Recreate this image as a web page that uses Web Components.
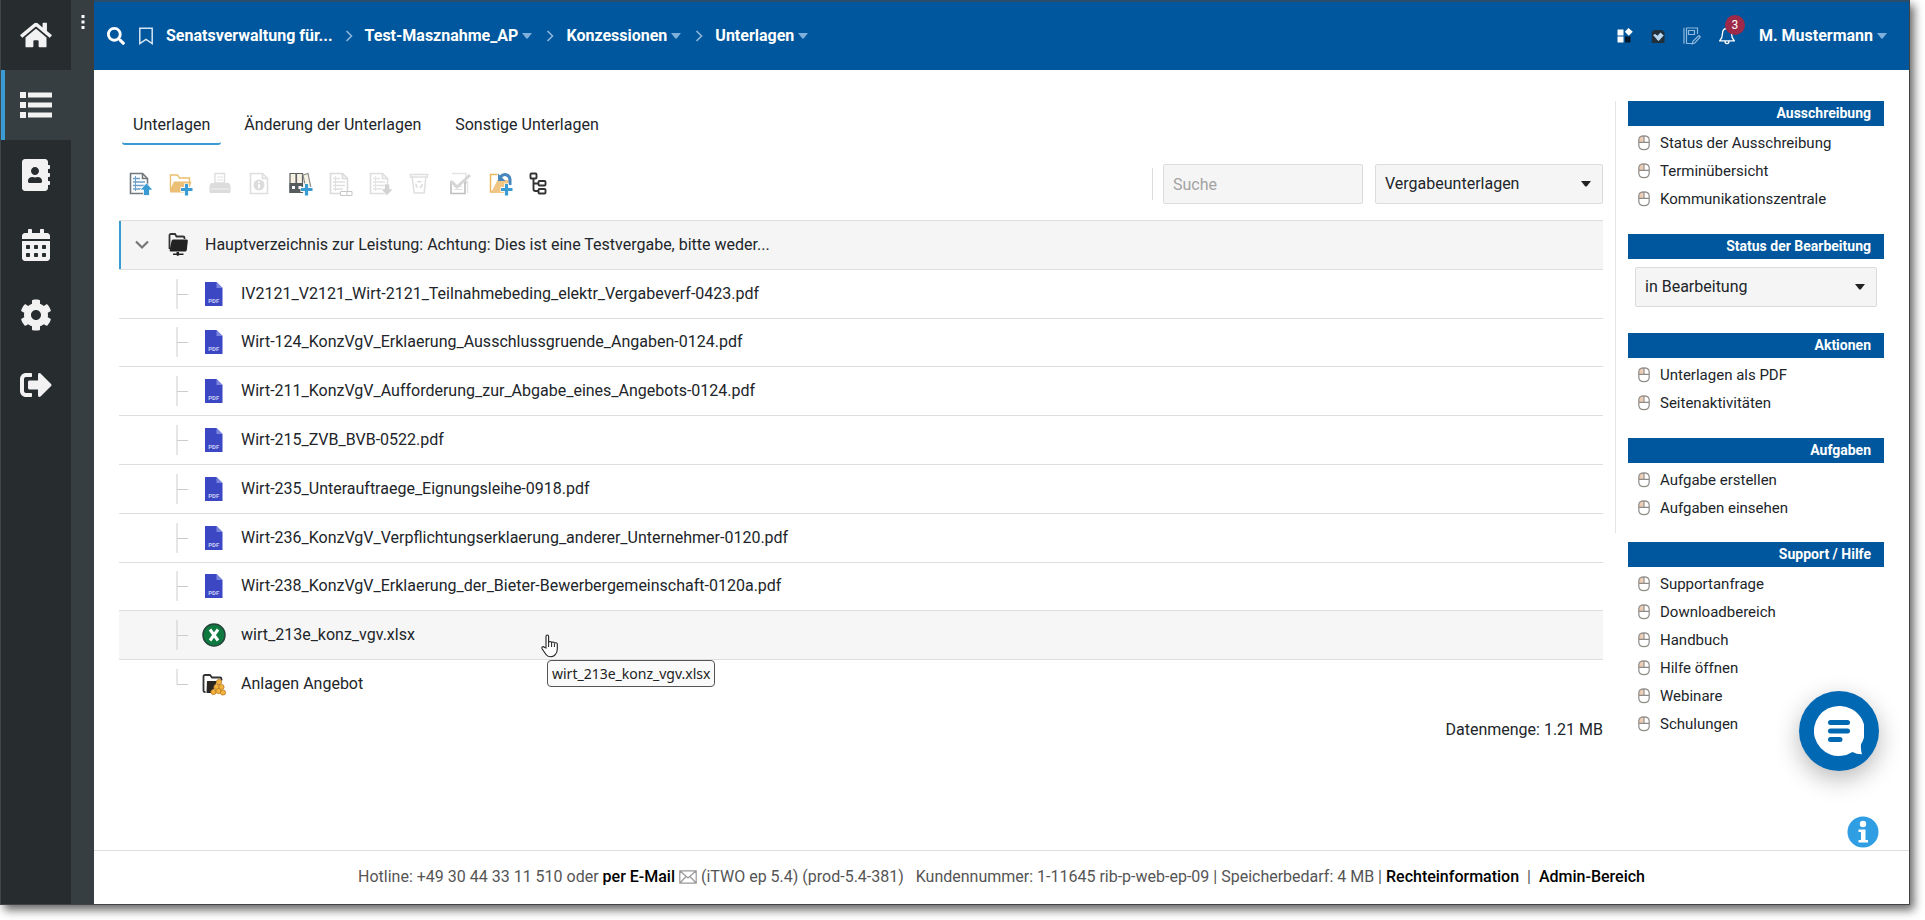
<!DOCTYPE html>
<html lang="de">
<head>
<meta charset="utf-8">
<title>Unterlagen</title>
<style>
  html { background: #fff; }
  body { margin: 0; font: 16px/24px Roboto, "Liberation Sans", sans-serif; color: #212529; }
</style>
</head>
<body>
<app-shell>
  <nav-rail slot="nav"></nav-rail>
  <top-bar slot="header"></top-bar>
  <main-view>
    <tab-strip slot="tabs"></tab-strip>
    <tool-bar slot="tools"></tool-bar>
    <file-tree>
      <file-row kind="root" icon="netfolder">Hauptverzeichnis zur Leistung: Achtung: Dies ist eine Testvergabe, bitte weder...</file-row>
      <file-row icon="pdf">IV2121_V2121_Wirt-2121_Teilnahmebeding_elektr_Vergabeverf-0423.pdf</file-row>
      <file-row icon="pdf">Wirt-124_KonzVgV_Erklaerung_Ausschlussgruende_Angaben-0124.pdf</file-row>
      <file-row icon="pdf">Wirt-211_KonzVgV_Aufforderung_zur_Abgabe_eines_Angebots-0124.pdf</file-row>
      <file-row icon="pdf">Wirt-215_ZVB_BVB-0522.pdf</file-row>
      <file-row icon="pdf">Wirt-235_Unterauftraege_Eignungsleihe-0918.pdf</file-row>
      <file-row icon="pdf">Wirt-236_KonzVgV_Verpflichtungserklaerung_anderer_Unternehmer-0120.pdf</file-row>
      <file-row icon="pdf">Wirt-238_KonzVgV_Erklaerung_der_Bieter-Bewerbergemeinschaft-0120a.pdf</file-row>
      <file-row kind="hover" icon="xlsx" tip="wirt_213e_konz_vgv.xlsx">wirt_213e_konz_vgv.xlsx</file-row>
      <file-row kind="last" icon="bids">Anlagen Angebot</file-row>
    </file-tree>
    <data-volume slot="sum">Datenmenge: 1.21 MB</data-volume>
    <side-column slot="side">
      <side-panel heading="Ausschreibung">
        <panel-link>Status der Ausschreibung</panel-link>
        <panel-link>Terminübersicht</panel-link>
        <panel-link>Kommunikationszentrale</panel-link>
      </side-panel>
      <side-panel heading="Status der Bearbeitung" kind="field">
        <select-box label="Status der Bearbeitung" value="in Bearbeitung"></select-box>
      </side-panel>
      <side-panel heading="Aktionen">
        <panel-link>Unterlagen als PDF</panel-link>
        <panel-link>Seitenaktivitäten</panel-link>
      </side-panel>
      <side-panel heading="Aufgaben">
        <panel-link>Aufgabe erstellen</panel-link>
        <panel-link>Aufgaben einsehen</panel-link>
      </side-panel>
      <side-panel heading="Support / Hilfe" slot="support">
        <panel-link>Supportanfrage</panel-link>
        <panel-link>Downloadbereich</panel-link>
        <panel-link>Handbuch</panel-link>
        <panel-link>Hilfe öffnen</panel-link>
        <panel-link>Webinare</panel-link>
        <panel-link>Schulungen</panel-link>
      </side-panel>
    </side-column>
  </main-view>
  <float-buttons slot="float"></float-buttons>
  <page-footer slot="footer"></page-footer>
</app-shell>

<script>
const sheet = '<path d="M1.5 1.5h12l5 5v15h-17z" fill="#fff" stroke="C" stroke-width="1.6"/><path d="M13.5 1.5v5h5" fill="none" stroke="C" stroke-width="1.6"/>';
const lines = '<path d="M4 6.5h7M4 10h12M4 13.5h12M4 17h10" stroke="L" stroke-width="1.3"/><path d="M6.5 4v15" stroke="L" stroke-width="1"/>';
const plus = '<path d="M17.5 11.5v12M11.5 17.5h12" stroke="#fff" stroke-width="5"/><path d="M17.5 12v11.5M12 17.5h11.5" stroke="#3a9bd3" stroke-width="3.2"/>';
const ICONS = {
  home: ['0 0 576 512', '<path fill="currentColor" d="M280.37 148.26L96 300.11V464a16 16 0 0 0 16 16l112.06-.29a16 16 0 0 0 15.92-16V368a16 16 0 0 1 16-16h64a16 16 0 0 1 16 16v95.64a16 16 0 0 0 16 16.05L464 480a16 16 0 0 0 16-16V300L295.67 148.26a12.19 12.19 0 0 0-15.3 0zM571.6 251.47L488 182.56V44.05a12 12 0 0 0-12-12h-56a12 12 0 0 0-12 12v72.61L318.47 43a48 48 0 0 0-61 0L4.34 251.47a12 12 0 0 0-1.6 16.9l25.5 31A12 12 0 0 0 45.15 301l235.22-193.74a12.19 12.19 0 0 1 15.3 0L530.9 301a12 12 0 0 0 16.9-1.6l25.5-31a12 12 0 0 0-1.7-16.93z"/>'],
  list: ['0 0 32 32', '<path fill="currentColor" d="M0 3h6v6H0zM8 3.5h24v5H8zM0 13h6v6H0zM8 13.5h24v5H8zM0 23h6v6H0zM8 23.5h24v5H8z"/>'],
  contacts: ['0 0 448 512', '<path fill="currentColor" d="M436 160c6.6 0 12-5.4 12-12v-40c0-6.6-5.4-12-12-12h-20V48c0-26.5-21.5-48-48-48H48C21.5 0 0 21.5 0 48v416c0 26.5 21.5 48 48 48h320c26.5 0 48-21.5 48-48v-48h20c6.6 0 12-5.4 12-12v-40c0-6.6-5.4-12-12-12h-20v-64h20c6.6 0 12-5.4 12-12v-40c0-6.6-5.4-12-12-12h-20v-64h20zm-228-32c35.3 0 64 28.7 64 64s-28.7 64-64 64-64-28.7-64-64 28.7-64 64-64zm112 236.8c0 10.6-10 19.2-22.4 19.2H118.4C106 384 96 375.4 96 364.8v-19.2c0-31.8 30.1-57.6 67.2-57.6h5c12.3 5.1 25.7 8 39.8 8s27.6-2.9 39.8-8h5c37.1 0 67.2 25.8 67.2 57.6v19.2z"/>'],
  calendar: ['0 0 448 512', '<path fill="currentColor" d="M0 464c0 26.5 21.5 48 48 48h352c26.5 0 48-21.5 48-48V192H0v272zm320-196c0-6.6 5.4-12 12-12h40c6.6 0 12 5.4 12 12v40c0 6.6-5.4 12-12 12h-40c-6.6 0-12-5.4-12-12v-40zm0 128c0-6.6 5.4-12 12-12h40c6.6 0 12 5.4 12 12v40c0 6.6-5.4 12-12 12h-40c-6.6 0-12-5.4-12-12v-40zM192 268c0-6.6 5.4-12 12-12h40c6.6 0 12 5.4 12 12v40c0 6.6-5.4 12-12 12h-40c-6.6 0-12-5.4-12-12v-40zm0 128c0-6.6 5.4-12 12-12h40c6.6 0 12 5.4 12 12v40c0 6.6-5.4 12-12 12h-40c-6.6 0-12-5.4-12-12v-40zM64 268c0-6.6 5.4-12 12-12h40c6.6 0 12 5.4 12 12v40c0 6.6-5.4 12-12 12H76c-6.6 0-12-5.4-12-12v-40zm0 128c0-6.6 5.4-12 12-12h40c6.6 0 12 5.4 12 12v40c0 6.6-5.4 12-12 12H76c-6.6 0-12-5.4-12-12v-40zM400 64h-48V16c0-8.8-7.2-16-16-16h-32c-8.8 0-16 7.2-16 16v48H160V16c0-8.8-7.2-16-16-16h-32c-8.8 0-16 7.2-16 16v48H48C21.5 64 0 85.5 0 112v48h448v-48c0-26.5-21.5-48-48-48z"/>'],
  cog: ['0 0 512 512', '<path fill="currentColor" d="M487.4 315.7l-42.6-24.6c4.3-23.2 4.3-47 0-70.2l42.6-24.6c4.9-2.8 7.1-8.6 5.5-14-11.1-35.6-30-67.8-54.7-94.6-3.8-4.1-10-5.1-14.8-2.3L380.8 110c-17.9-15.4-38.5-27.3-60.8-35.1V25.8c0-5.6-3.9-10.5-9.4-11.7-36.7-8.2-74.3-7.8-109.2 0-5.5 1.2-9.4 6.1-9.4 11.7V75c-22.2 7.9-42.8 19.8-60.8 35.1L88.7 85.5c-4.9-2.8-11-1.9-14.8 2.3-24.7 26.7-43.6 58.9-54.7 94.6-1.7 5.4.6 11.2 5.5 14L67.3 221c-4.3 23.2-4.3 47 0 70.2l-42.6 24.6c-4.9 2.8-7.1 8.6-5.5 14 11.1 35.6 30 67.8 54.7 94.6 3.8 4.1 10 5.1 14.8 2.3l42.6-24.6c17.9 15.4 38.5 27.3 60.8 35.1v49.2c0 5.6 3.9 10.5 9.4 11.7 36.7 8.2 74.3 7.8 109.2 0 5.5-1.2 9.4-6.1 9.4-11.7v-49.2c22.2-7.9 42.8-19.8 60.8-35.1l42.6 24.6c4.9 2.8 11 1.9 14.8-2.3 24.7-26.7 43.6-58.9 54.7-94.6 1.5-5.5-.7-11.3-5.6-14.1zM256 336c-44.1 0-80-35.9-80-80s35.9-80 80-80 80 35.9 80 80-35.9 80-80 80z"/>'],
  logout: ['0 0 512 512', '<path fill="currentColor" d="M497 273L329 441c-15 15-41 4.5-41-17v-96H152c-13.3 0-24-10.7-24-24v-96c0-13.3 10.7-24 24-24h136V88c0-21.4 25.9-32 41-17l168 168c9.3 9.4 9.3 24.6 0 34zM192 436v-40c0-6.6-5.4-12-12-12H96c-17.7 0-32-14.3-32-32V160c0-17.7 14.3-32 32-32h84c6.6 0 12-5.4 12-12V76c0-6.6-5.4-12-12-12H96c-53 0-96 43-96 96v192c0 53 43 96 96 96h84c6.6 0 12-5.4 12-12z"/>'],
  dots: ['0 0 4 16', '<path fill="#fff" d="M.5 1h3v3h-3zM.5 6.5h3v3h-3zM.5 12h3v3h-3z"/>'],
  search: ['0 0 512 512', '<path fill="currentColor" d="M505 442.7L405.3 343c-4.5-4.5-10.6-7-17-7H372c27.6-35.3 44-79.7 44-128C416 93.1 322.9 0 208 0S0 93.1 0 208s93.1 208 208 208c48.3 0 92.7-16.4 128-44v16.3c0 6.4 2.5 12.5 7 17l99.7 99.7c9.4 9.4 24.6 9.4 33.9 0l28.3-28.3c9.4-9.4 9.4-24.6.1-34zM208 336c-70.7 0-128-57.2-128-128 0-70.7 57.2-128 128-128 70.7 0 128 57.2 128 128 0 70.7-57.2 128-128 128z"/>'],
  bookmark: ['0 0 14 18', '<path fill="none" stroke="#d5e5f3" stroke-width="1.5" d="M.8 1.3h12.4v15.2L7 12.3.8 16.5z"/>'],
  chevron: ['0 0 8 12', '<path fill="none" stroke="#8db5d9" stroke-width="1.6" d="M1.5 1l5 5-5 5"/>'],
  caret: ['0 0 10 6', '<path fill="currentColor" d="M0 0h10L5.7 5.5H4.3z"/>'],
  apps: ['0 0 16 16', '<path fill="#fff" d="M.5 1.5h6v6h-6zM.5 8.500h6v6h-6zM11.500 0l4.300 3.800-4 4-4-4z"/><path fill="#06182b" d="M8 8.500h5.500v6H8z"/>'],
  check: ['0 0 14 16', '<path fill="#22303c" d="M3 2h8l2.500 2.500V15H.8V4z"/><path fill="#b9d8ef" d="M9.500 4.500l3.200 3-5 5.500-1.700-1.200-.8-1.300L2 7l2.200-1 2.300 1.700z"/>'],
  notes: ['0 0 18 18', '<g fill="none" stroke="#8fb9de" stroke-width="1.200"><path d="M1 .8v16M3.500.8v16M11 16.500H3.500M3.500 1h11v6M5.500 3.500h6v4h-6z"/><path d="M15.800 8.500l1.500 1.500-5.500 6-2.500.8.600-2.600z"/></g>'],
  bell: ['0 0 16 18', '<path fill="none" stroke="#fff" stroke-width="1.300" d="M8 1.500c-3 0-4.500 2.300-4.500 5 0 4-1 5.500-2.700 7.300h14.400C13.500 12 12.500 10.500 12.500 6.500c0-2.700-1.500-5-4.500-5zM6 14c0 3.500 4 3.500 4 0M8 0v1.500"/>'],
  upload: ['0 0 24 24', sheet.replaceAll('C', '#72787c') + lines.replaceAll('L', '#6c9fc9') + '<path d="M17.500 11l6.500 7h-3.500v5.500h-6V18H11z" fill="#3a9bd3" stroke="#fff" stroke-width=".8"/>'],
  addfolder: ['0 0 24 24', '<path d="M1.500 19V3h7l2 3h10v4" fill="none" stroke="#ecbf6d" stroke-width="1.400"/><path d="M1 20.500V18L5 9.500h17.500l-3 11z" fill="#ebc076"/>' + plus],
  print: ['0 0 24 24', '<path d="M6 1.500h9.500V11H6z" fill="#fff" stroke="#dedede" stroke-width="1.400"/><path d="M8 5h6M8 8h6" stroke="#e2e2e2"/><path d="M2 11h18l1.500 3v6a1 1 0 0 1-1 1h-19a1 1 0 0 1-1-1v-6z" fill="#dcdcdc"/><path d="M2 17h18" stroke="#f2f2f2"/>'],
  info: ['0 0 24 24', sheet.replaceAll('C', '#dedede') + '<circle cx="10" cy="13" r="5.500" fill="#dcdcdc"/><path d="M10 9.500v1.500M10 12.300v4" stroke="#fff" stroke-width="1.800"/>'],
  binders: ['0 0 24 24', '<path d="M1 1.500h6v19H1zM7.500 1.500h6v19h-6z" fill="#f7f1e2" stroke="#5e6264" stroke-width="1.200"/><path d="M14 3l5-1.500 3.500 17-5 1.500z" fill="#f7f1e2" stroke="#8a8a88" stroke-width="1.200"/><path d="M.500 11h13.500v10H.500z" fill="#565b5e"/><path d="M3 14h3v3H3zM9.500 14h3v3h-3z" fill="#fff"/>' + plus],
  rename: ['0 0 24 24', sheet.replaceAll('C', '#dadada') + lines.replaceAll('L', '#e0e0e0') + '<path d="M11.500 19.500h11.500v4H11.500z" fill="#fff" stroke="#c6c6c6"/><path d="M18 19.500v4" stroke="#c6c6c6"/>'],
  download: ['0 0 24 24', sheet.replaceAll('C', '#dedede') + lines.replaceAll('L', '#e4e4e4') + '<path d="M15.500 12h5v5h3.500l-6 6.500-6-6.500h3.500z" fill="#d2d2d2" stroke="#fff" stroke-width=".6"/>'],
  trash: ['0 0 24 24', '<path d="M1.500 2.500h17v2.500h-17zM3.200 5.500l2 15.500h10l1.600-15.500" fill="none" stroke="#dfdfdf" stroke-width="1.500"/><circle cx="10" cy="12.500" r="3" fill="none" stroke="#dcdcdc" stroke-width="1.600" stroke-dasharray="4 2"/>'],
  verify: ['0 0 24 24', '<path d="M3 1.500h14V12M18.500 9v12" fill="none" stroke="#e4e4e4" stroke-width="1.400"/><path d="M2 9v12.500h14V9" fill="none" stroke="#bfbfbf" stroke-width="1.600"/><path d="M5 17.500h8M5 14.500h8" stroke="#e0e0e0"/><path d="M2 9l6 6L21 3" fill="none" stroke="#d6d6d6" stroke-width="3"/>'],
  restore: ['0 0 24 24', '<path d="M1.500 20.500V2.500h7M1.500 20.500L6 18" fill="none" stroke="#ecb95f" stroke-width="1.500"/><path d="M2 21L8.500 8H20l-3.500 13z" fill="#efc684"/><path d="M11.500 5c3-4 9-3 9.500 2.500V13" fill="none" stroke="#4787bd" stroke-width="3"/><path d="M9 1.500V9h7.500z" fill="#4787bd"/>' + plus],
  tree: ['0 0 24 24', '<g fill="none" stroke="#333" stroke-width="1.900"><rect x="1.500" y="1.500" width="6" height="5" rx="1"/><rect x="9.500" y="9" width="7" height="4.500" rx="1"/><rect x="9.500" y="17" width="7" height="4.500" rx="1"/><path d="M4.500 6.500V17q0 2 2 2h3M4.500 11.500h5"/></g>'],
  netfolder: ['0 0 20 24', '<path d="M1.500 16V2.500q0-1.500 1.500-1.500h4l1.500 2.500h6.500q1.500 0 1.500 1.500v1" fill="none" stroke="#333" stroke-width="1.800"/><path d="M5 6.500h13.500q1.500 0 1.300 1.500l-1 9q-.3 1.500-1.800 1.500H2.500q-1 0-.8-1.500L3.500 8q.3-1.500 1.500-1.500zM5 20.500h3.500V19h2.500v1.500h4.500v1.500H11q-1.200 2-2.400 0H5z" fill="#222"/>'],
  down: ['0 0 14 10', '<path fill="none" stroke="#777" stroke-width="2.200" d="M1 1.500l6 6 6-6"/>'],
  pdf: ['0 0 24 26', '<path d="M3 1h11.500l6 6v18H3z" fill="#3b47c3"/><path d="M14.500 1l6 6h-6z" fill="#7d86df"/><text x="11.700" y="22" font-family="Roboto, sans-serif" font-weight="700" font-size="6" fill="#c9cdf5" text-anchor="middle">PDF</text>'],
  xlsx: ['0 0 24 24', '<circle cx="12" cy="12" r="11" fill="#0f7a40" stroke="#26453a" stroke-width="1.500"/><path d="M8 6.500l8 11M16 6.500l-8 11" stroke="#fff" stroke-width="3"/>'],
  bids: ['0 0 24 24', '<path d="M3.500 20H3q-1.500 0-1.500-1.500v-14Q1.500 3 3 3h5l2 2.500h8q1.500 0 1.500 1.500v1.500" fill="none" stroke="#333" stroke-width="1.800"/><path d="M5 9h10l-5 12H4.500z" fill="#2b2620"/><g fill="#f3b33f" stroke="#b97a1d" stroke-width=".8"><circle cx="17" cy="10" r="2.600"/><circle cx="14.500" cy="15" r="2.600"/><circle cx="19.500" cy="15" r="2.600"/><circle cx="11.500" cy="20" r="2.600"/><circle cx="16.500" cy="19" r="2.600"/><circle cx="21" cy="20.500" r="2.600"/></g>'],
  join: ['0 0 12 30', '<path d="M1 0v30M1 15.500h11" fill="none" stroke="#ccc" stroke-width="1"/>'],
  end: ['0 0 12 30', '<path d="M1 0v15.500h11" fill="none" stroke="#ccc" stroke-width="1"/>'],
  mouse: ['0 0 12 16', '<path d="M1 7V4.500Q1 1 5.500 1V7z" fill="#edccb5"/><path d="M6 .8q5.200 0 5.200 4.200v5q0 4.700-5.200 4.700T.8 10V5Q.8.800 6 .8zM.8 7.300h10.400M6 .8v6.500" fill="none" stroke="#8f8b87" stroke-width="1.200"/>'],
  mail: ['0 0 18 14', '<g fill="none" stroke="#999" stroke-width="1.200"><path d="M.8.8h16.400v12.400H.8zM1 1l8 7 8-7M1 13l6-6.500M17 13l-6-6.500"/></g>'],
  hand: ['0 0 18 24', '<path d="M5 14V2.500q0-1.500 1.300-1.500T7.600 2.500V9q.2-1.500 1.500-1.500 1.400 0 1.500 1.500 .2-1 1.400-1 1.300 0 1.400 1.500 .3-.8 1.400-.8 1.500 0 1.500 1.600V15q0 3-1.600 5-1.500 2.700-5 2.700T5 20.500L1.200 15q-.8-1.700.4-2.200 1-.5 2 .7z" fill="#fff" stroke="#222" stroke-width="1.100"/><path d="M7.600 9v4M10.600 9v4M13.400 10v3" stroke="#222"/>'],
  chat: ['0 0 50 50', '<path d="M25 0a25 25 0 1 0 13.500 46q4.500 2.500 9.500 2.300-1.500-5-1-10A25 25 0 0 0 25 0z" fill="#fff"/><path d="M16.500 16.500h17M16.500 25h17M16.500 33.500h9.500" stroke="#0168b3" stroke-width="5" stroke-linecap="round"/>'],
  about: ['0 0 32 32', '<circle cx="16" cy="16" r="15.500" fill="#2f9ee2"/><circle cx="16" cy="8" r="3.200" fill="#fff"/><path d="M11.500 13.500h7v10.500h2.500v2.500H11.500V24H14v-8h-2.500z" fill="#fff"/>']
};

class Base extends HTMLElement {
  connectedCallback() {
    if (this.shadowRoot) return;
    this.attachShadow({ mode: 'open' }).innerHTML =
      '<style>:host,*{box-sizing:border-box}a{color:inherit;text-decoration:none}' +
      'button{font:inherit;color:inherit;background:none;border:0;margin:0;padding:0;display:flex;align-items:center;cursor:pointer}' +
      this.css() + '</style>' + this.html();
  }
  css() { return ':host{display:block}'; }
  html() { return '<slot></slot>'; }
}
const define = (name, css, html) => customElements.define(name, class extends Base {
  css() { return css; }
  html() { return typeof html === 'function' ? html(this) : html; }
});
const icon = (name, w, h) => `<ui-icon name="${name}" style="width:${w}px;height:${h || w}px"></ui-icon>`;

define('ui-icon', ':host{display:block;flex:none}svg{display:block;width:100%;height:100%}', el => {
  const [box, body] = ICONS[el.getAttribute('name')];
  return `<svg viewBox="${box}" aria-hidden="true">${body}</svg>`;
});

define('app-shell', `
  :host{display:block;padding:0 15px 15px 0}
  .window{position:relative;display:grid;grid-template-columns:auto minmax(0,1fr);grid-template-rows:auto 1fr auto;
    min-height:calc(100vh - 15px);background:#fff;border-right:1px solid #3f4347;border-bottom:1px solid #3f4347;
    box-shadow:4px 5px 9px rgba(0,0,0,.6)}
  .nav{grid-row:1 / 4}
`, `<div class="window"><div class="nav"><slot name="nav"></slot></div><slot name="header"></slot><slot></slot><slot name="footer"></slot><slot name="float"></slot></div>`);

define('nav-rail', `
  :host{display:flex;height:100%;background:#373e41;color:#f2f2f2;border-left:1px solid #3f4548}
  nav{width:70px;background:#272c2f}
  a{height:70px;display:flex;align-items:center;justify-content:center}
  a.on{background:#373e41;box-shadow:inset 4px 0 #3a9bd3}
  button{width:23px;height:44px;justify-content:center}
`, `<nav aria-label="Hauptnavigation">
  <a href="#start" aria-label="Startseite">${icon('home', 32, 28)}</a>
  <a href="#liste" class="on" aria-label="Liste">${icon('list', 32)}</a>
  <a href="#kontakte" aria-label="Kontakte">${icon('contacts', 28, 32)}</a>
  <a href="#kalender" aria-label="Kalender">${icon('calendar', 28, 32)}</a>
  <a href="#einstellungen" aria-label="Einstellungen">${icon('cog', 32)}</a>
  <a href="#abmelden" aria-label="Abmelden">${icon('logout', 32)}</a>
</nav><button aria-label="Menü">${icon('dots', 4, 16)}</button>`);

define('top-bar', `
  :host{display:flex;align-items:center;height:70px;padding:0 22px 0 13px;background:#00579d;border-top:2px solid #2a4d6c;color:#fff;font-weight:700}
  nav,.user{display:flex;align-items:center}
  .user{margin-left:auto}
  .find{margin-right:14px}
  .mark{margin-right:13px}
  .sep{margin:0 12px}
  .menu{gap:4px;white-space:nowrap}
  .menu ui-icon{color:#7fb0dc}
  nav .menu{padding-right:2px}
  .tools{display:flex;align-items:center;gap:18px;margin-right:24px}
  .bell{position:relative}
  .badge{position:absolute;left:6px;top:-12px;width:20px;height:20px;border-radius:50%;background:#9c2a48;font:12px/20px Roboto,sans-serif;text-align:center}
`, `<button class="find" aria-label="Suchen">${icon('search', 18)}</button>
<button class="mark" aria-label="Merken">${icon('bookmark', 14, 18)}</button>
<nav aria-label="Pfad">
  <a href="#senat">Senatsverwaltung für...</a><span class="sep">${icon('chevron', 8, 12)}</span>
  <button class="menu">Test-Masznahme_AP${icon('caret', 10, 6)}</button><span class="sep">${icon('chevron', 8, 12)}</span>
  <button class="menu">Konzessionen${icon('caret', 10, 6)}</button><span class="sep">${icon('chevron', 8, 12)}</span>
  <button class="menu">Unterlagen${icon('caret', 10, 6)}</button>
</nav>
<div class="user"><div class="tools">
  <button aria-label="Anwendungen">${icon('apps', 16)}</button>
  <button aria-label="Prüfung">${icon('check', 14, 16)}</button>
  <button aria-label="Notizen">${icon('notes', 18)}</button>
  <button class="bell" aria-label="Benachrichtigungen">${icon('bell', 16, 18)}<span class="badge">3</span></button>
</div><button class="menu">M. Mustermann${icon('caret', 10, 6)}</button></div>`);

define('main-view', `
  :host{display:grid;grid-template-columns:minmax(0,1fr) 269px;gap:12px;align-items:start;padding:31px 25px 0}
`, `<main><slot name="tabs"></slot><slot name="tools"></slot><slot></slot><slot name="sum"></slot></main><slot name="side"></slot>`);

define('tab-strip', `
  :host{display:flex;gap:12px;padding:0 3px}
  a{padding:12px 11px 6px;border-bottom:2px solid transparent;border-radius:3px}
  a.on{border-color:#3a9bd3}
`, `<a href="#unterlagen" class="on">Unterlagen</a><a href="#aenderung">Änderung der Unterlagen</a><a href="#sonstige">Sonstige Unterlagen</a>`);

define('select-box', `
  :host{display:grid;align-items:center}
  select{grid-area:1/1;width:100%;height:40px;padding:0 9px;appearance:none;font:inherit;color:#212529;background:#f5f5f5;border:1px solid #dcdcdc;border-radius:2px}
  ui-icon{grid-area:1/1;justify-self:end;margin-right:12px;color:#222;pointer-events:none}
`, el => `<select aria-label="${el.getAttribute('label')}"><option>${el.getAttribute('value')}</option></select>${icon('caret', 10, 6)}`);

define('tool-bar', `
  :host{display:flex;align-items:center;margin:19px 0 16px;padding-left:1px}
  .icons{display:flex}
  button{width:40px;height:40px;padding-left:9px}
  .fields{display:flex;align-items:center;gap:12px;margin-left:auto}
  .rule{width:1px;height:32px;margin-right:-2px;background:#dcdcdc}
  input{width:200px;height:40px;padding:0 9px;font:inherit;background:#f5f5f5;border:1px solid #dcdcdc;border-radius:2px}
  input::placeholder{color:#a3a3a3}
  select-box{width:228px}
`, `<div class="icons">${[['upload', 'Hochladen'], ['addfolder', 'Neuer Ordner'], ['print', 'Drucken'], ['info', 'Information'], ['binders', 'Ordner hinzufügen'], ['rename', 'Umbenennen'], ['download', 'Herunterladen'], ['trash', 'Papierkorb'], ['verify', 'Prüfen'], ['restore', 'Wiederherstellen'], ['tree', 'Baumansicht']]
  .map(([n, t]) => `<button aria-label="${t}">${icon(n, 24)}</button>`).join('')}</div>
<div class="fields"><span class="rule"></span><input type="text" placeholder="Suche" aria-label="Suche">
<select-box label="Bereich" value="Vergabeunterlagen"></select-box></div>`);

define('file-tree', ':host{display:grid;grid-auto-rows:1fr;min-height:488px}', '<div role="tree" style="display:contents"><slot></slot></div>');

define('file-row', `
  :host{display:flex;align-items:center;position:relative;padding-left:57px;border-top:1px solid #dedede}
  :host([kind=root]){background:#f5f5f5;box-shadow:inset 2px 0 #3a9bd3;padding-left:16px}
  :host([kind=hover]){background:#f6f6f6;z-index:1}
  .icon{width:24px;display:flex;justify-content:center;margin:0 15px 0 14px}
  :host([kind=root]) .icon{margin:0 15px 0 17px}
  .hand{position:absolute;left:422px;top:23px}
  .tip{position:absolute;left:428px;top:49px;padding:0 4px;border:1px solid #555;border-radius:4px;background:#fafafa;color:#222;font:14px/25px "Noto Sans","Open Sans",sans-serif;white-space:nowrap}
  a{white-space:nowrap}
`, el => {
  const kind = el.getAttribute('kind'), name = el.getAttribute('icon'), tip = el.getAttribute('tip');
  const lead = kind === 'root' ? `<button aria-label="Zuklappen">${icon('down', 14, 10)}</button>` : icon(kind === 'last' ? 'end' : 'join', 12, 30);
  const mark = name === 'netfolder' ? icon(name, 20, 24) : name === 'pdf' ? icon(name, 24, 26) : icon(name, 24);
  return `${lead}<span class="icon">${mark}</span><a href="#datei"><slot></slot></a>` +
    (tip ? `<span class="hand">${icon('hand', 18, 24)}</span><span class="tip" role="tooltip">${tip}</span>` : '');
});

define('data-volume', ':host{display:block;padding:10px 0;text-align:right}', '<slot></slot>');

define('side-column', `
  :host{display:block}
  .top{display:flex;flex-direction:column;gap:21px;border-left:1px solid #e4e4e4;padding:0 0 11px 12px}
  .support{padding:9px 0 0 13px}
`, '<div class="top"><slot></slot></div><div class="support"><slot name="support"></slot></div>');

define('side-panel', `
  :host{display:block}
  h2{margin:0 0 3px;padding-right:13px;background:#00579d;color:#fff;font-size:14px;line-height:25px;font-weight:700;text-align:right}
  :host([kind=field]) .body{padding:5px 7px}
`, el => `<section><h2>${el.getAttribute('heading')}</h2><div class="body"><slot></slot></div></section>`);

define('panel-link', `
  :host{display:block;font-size:15px;line-height:28px}
  a{display:flex;align-items:center;gap:10px;padding-left:10px}
`, `<a href="#aktion">${icon('mouse', 12, 16)}<span><slot></slot></span></a>`);

define('float-buttons', `
  :host{position:absolute;right:30px;bottom:56px;display:flex;flex-direction:column;align-items:flex-end;gap:45px}
  button{justify-content:center;border-radius:50%}
  .chat{width:80px;height:80px;background:#0168b3;box-shadow:0 8px 24px rgba(0,0,0,.28)}
`, `<button class="chat" aria-label="Chat">${icon('chat', 50)}</button><button aria-label="Hilfe">${icon('about', 32)}</button>`);

define('page-footer', `
  :host{display:flex;align-items:center;justify-content:center;height:54px;padding-bottom:2px;border-top:1px solid #dedede;color:#555}
  p{margin:0;white-space:pre}
  a{color:#000;font-weight:500}
  ui-icon{display:inline-block;vertical-align:-2px}
`, `<p>Hotline: +49 30 44 33 11 510 oder <a href="#mail">per E-Mail</a> ${icon('mail', 18, 14)} (iTWO ep 5.4) (prod-5.4-381)   Kundennummer: 1-11645 rib-p-web-ep-09 | Speicherbedarf: 4 MB | <a href="#rechte">Rechteinformation</a>  |  <a href="#admin">Admin-Bereich</a></p>`);
</script>
</body>
</html>
